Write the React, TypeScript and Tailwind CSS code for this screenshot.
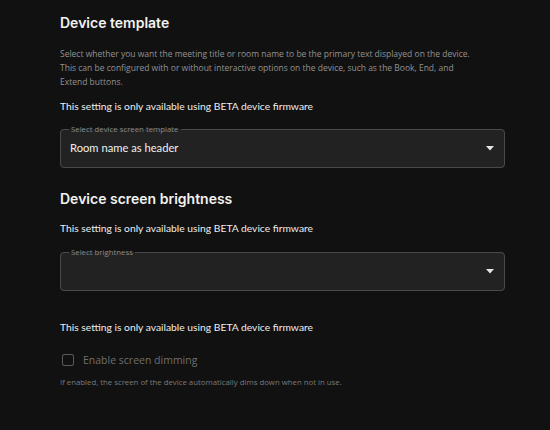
import React from "react";

const BETA_NOTE = "This setting is only available using BETA device firmware";

function Caret() {
  return (
    <svg width="8" height="5" viewBox="0 0 8 5" className="shrink-0">
      <path d="M0 0h8L4 4.5z" fill="#e5e5e5" />
    </svg>
  );
}

function OutlinedSelect({ label, value }: { label: string; value?: string }) {
  return (
    <fieldset className="relative h-[43px] w-[445px] rounded-[4px] border border-[#4a4a4a] bg-[#222222] pl-[9px] pr-[10px]">
      <legend className="ml-[-1px] px-[2px] text-[7.8px] leading-[8px] text-[#8a8a8a] font-['Open_Sans',sans-serif]">
        {label}
      </legend>
      <div className="flex h-[33px] items-center justify-between pb-[2px]">
        <span className="text-[11.2px] text-[#f0f0f0] font-['Lato',sans-serif]">
          {value ?? ""}
        </span>
        <Caret />
      </div>
    </fieldset>
  );
}

export default function App() {
  return (
    <div className="min-h-[430px] w-[550px] bg-[#111111] px-[60px] pt-[13px]">
      <h2 className="text-[14px] leading-[20px] font-semibold text-[#f2f2f2] font-['Inter',sans-serif]">
        Device template
      </h2>
      <p className="mt-[14px] whitespace-nowrap text-[8.5px] leading-[14px] text-[#929292] font-['Open_Sans',sans-serif]">
        Select whether you want the meeting title or room name to be the primary text displayed on the device.
        <br />
        This can be configured with or without interactive options on the device, such as the Book, End, and
        <br />
        Extend buttons.
      </p>
      <p className="mt-[9px] text-[10.3px] leading-[16px] text-[#eeeeee] font-['Lato',sans-serif]">
        {BETA_NOTE}
      </p>
      <div className="mt-[11px]">
        <OutlinedSelect label="Select device screen template" value="Room name as header" />
      </div>

      <h2 className="mt-[21px] text-[14px] leading-[20px] font-semibold text-[#f2f2f2] font-['Inter',sans-serif]">
        Device screen brightness
      </h2>
      <p className="mt-[11px] text-[10.3px] leading-[16px] text-[#eeeeee] font-['Lato',sans-serif]">
        {BETA_NOTE}
      </p>
      <div className="mt-[12px]">
        <OutlinedSelect label="Select brightness" />
      </div>

      <p className="mt-[28px] text-[10.3px] leading-[16px] text-[#eeeeee] font-['Lato',sans-serif]">
        {BETA_NOTE}
      </p>
      <label className="mt-[18px] flex items-center gap-[9px] pl-[2px]">
        <span className="h-[12px] w-[12px] rounded-[2px] border-[1.5px] border-[#5a5a5a]" />
        <span className="text-[10.5px] leading-[14px] text-[#6f6f6f] font-['Open_Sans',sans-serif]">
          Enable screen dimming
        </span>
      </label>
      <p className="mt-[10px] text-[7.8px] leading-[10px] text-[#7a7a7a] font-['Open_Sans',sans-serif]">
        If enabled, the screen of the device automatically dims down when not in use.
      </p>
    </div>
  );
}
